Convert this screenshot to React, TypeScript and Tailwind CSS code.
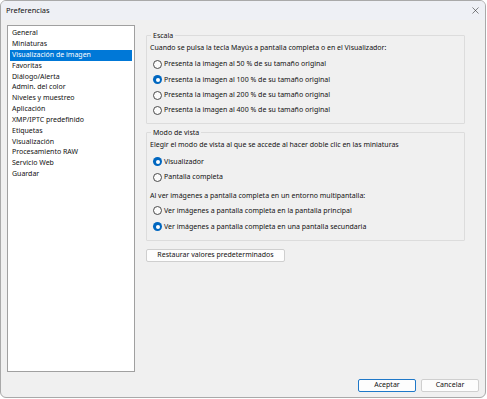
import { X } from "lucide-react";

const categories = [
  "General",
  "Miniaturas",
  "Visualización de imagen",
  "Favoritas",
  "Diálogo/Alerta",
  "Admin. del color",
  "Niveles y muestreo",
  "Aplicación",
  "XMP/IPTC predefinido",
  "Etiquetas",
  "Visualización",
  "Procesamiento RAW",
  "Servicio Web",
  "Guardar",
];

const Radio = ({ checked, label, tall }: { checked?: boolean; label: string; tall?: boolean }) => (
  <div className={(tall ? "h-[16px] " : "h-[15.3px] ") + "flex items-center gap-[2px] pl-[4px]"}>
    {checked ? (
      <span className="flex h-[9px] w-[9px] items-center justify-center rounded-full bg-[#0067c0]">
        <span className="h-[4px] w-[4px] rounded-full bg-white" />
      </span>
    ) : (
      <span className="h-[9px] w-[9px] rounded-full border border-[#4a4a4a] bg-[#fbfbfb]" />
    )}
    <span>{label}</span>
  </div>
);

const Group = ({ title, children }: { title: string; children: React.ReactNode }) => (
  <fieldset className="rounded-[1px] border border-[#dcdcdc] px-[2px] pb-[5px]">
    <legend className="ml-[2px] px-[2px] leading-[9px]">{title}</legend>
    {children}
  </fieldset>
);

const Btn = ({ label, primary, className }: { label: string; primary?: boolean; className?: string }) => (
  <button
    className={
      "flex h-[13px] items-center justify-center rounded-[2px] border bg-[#fdfdfd] " +
      (primary ? "border-[#1f78c8] " : "border-[#cfcfcf] ") +
      (className ?? "")
    }
  >
    {label}
  </button>
);

export default function App() {
  return (
    <div
      className="flex h-[399px] w-[487px] flex-col bg-white text-[7px] text-[#111]"
      style={{ fontFamily: '"Noto Sans", "Open Sans", sans-serif' }}
    >
      <div className="flex h-[398px] w-[486px] flex-col overflow-hidden rounded-[6px] border border-[#a9a9a9] bg-[#f0f0f0]">
        <div className="flex h-[19px] items-center justify-between bg-[#eef0f5] pl-[5px] pr-[4px] text-[7.5px]">
          <span>Preferencias</span>
          <X className="h-[11px] w-[11px] text-[#333]" strokeWidth={1.3} />
        </div>

        <div className="flex h-[352px] gap-[11px] pl-[6px] pt-[5px]">
          <div className="flex h-[347px] w-[128px] flex-col border border-[#a0a0a0] bg-white pt-[2px]">
            {categories.map((c, i) => (
              <div
                key={c + i}
                className={
                  "mx-[2px] flex h-[10.85px] items-center px-[2px] " +
                  (i === 2 ? "bg-[#0078d7] text-white" : "")
                }
              >
                {c}
              </div>
            ))}
          </div>

          <div className="flex w-[319px] flex-col pt-[6px]">
            <Group title="Escala">
              <div className="flex h-[17px] items-center pl-[1px]">
                Cuando se pulsa la tecla Mayús a pantalla completa o en el Visualizador:
              </div>
              <Radio label="Presenta la imagen al 50 % de su tamaño original" />
              <Radio checked label="Presenta la imagen al 100 % de su tamaño original" />
              <Radio label="Presenta la imagen al 200 % de su tamaño original" />
              <Radio label="Presenta la imagen al 400 % de su tamaño original" />
            </Group>

            <div className="h-[4px]" />

            <Group title="Modo de vista">
              <div className="flex h-[17px] items-center pl-[1px]">
                Elegir el modo de vista al que se accede al hacer doble clic en las miniaturas
              </div>
              <Radio checked label="Visualizador" />
              <Radio label="Pantalla completa" />
              <div className="flex h-[18px] items-end pb-[1px] pl-[1px]">
                Al ver imágenes a pantalla completa en un entorno multipantalla:
              </div>
              <Radio tall label="Ver imágenes a pantalla completa en la pantalla principal" />
              <Radio tall checked label="Ver imágenes a pantalla completa en una pantalla secundaria" />
            </Group>

            <div className="pt-[8px]">
              <Btn label="Restaurar valores predeterminados" className="w-[139px]" />
            </div>
          </div>
        </div>

        <div className="flex justify-end gap-[5px] pr-[6px] pt-[7px]">
          <Btn primary label="Aceptar" className="w-[58px]" />
          <Btn label="Cancelar" className="w-[58px]" />
        </div>
      </div>
    </div>
  );
}
